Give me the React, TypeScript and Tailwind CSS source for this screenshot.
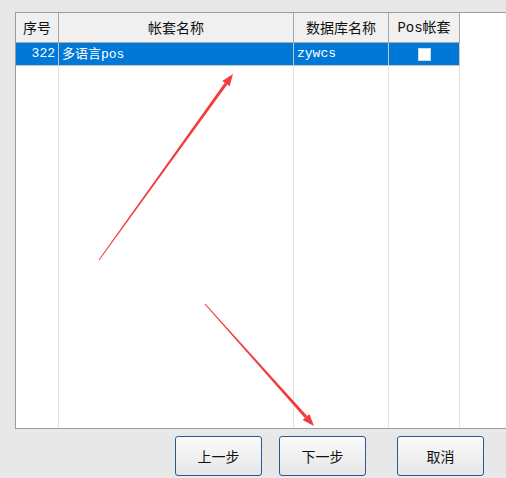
import React from 'react'

const cjk = { fontFamily: '"Noto Sans CJK SC", "DejaVu Sans", sans-serif' }
const mono = { fontFamily: '"Liberation Mono", "Noto Sans CJK SC", monospace' }

type Col = { title: React.ReactNode; key: string; w: string; cell: React.ReactNode; align: string }

const cols: Col[] = [
  { key: 'no', title: '序号', w: 'w-[43px]', cell: <span style={mono}>322</span>, align: 'justify-end pr-[3px]' },
  {
    key: 'name',
    title: '帐套名称',
    w: 'w-[235px]',
    cell: (
      <span>
        <span style={cjk}>多语言</span>
        <span style={mono}>pos</span>
      </span>
    ),
    align: 'justify-start pl-[3px]',
  },
  { key: 'db', title: '数据库名称', w: 'w-[95px]', cell: <span style={mono}>zywcs</span>, align: 'justify-start pl-[3px]' },
  {
    key: 'pos',
    title: (
      <span>
        <span style={mono}>Pos</span>帐套
      </span>
    ),
    w: 'w-[71px]',
    cell: <span className="block w-[13px] h-[13px] bg-white border border-[#d8d8d8]" />,
    align: 'justify-center',
  },
]

function Btn({ label, className }: { label: string; className?: string }) {
  return (
    <button
      className={
        'w-[87px] h-[40px] rounded-[3px] border border-[#2b5a8e] bg-gradient-to-b from-[#fbfbfb] to-[#e6e6e6] text-[14px] text-[#111] ' +
        (className ?? '')
      }
      style={cjk}
    >
      {label}
    </button>
  )
}

export default function App() {
  return (
    <div className="relative w-[506px] h-[478px] bg-[#e8e8e8] overflow-hidden">
      <div className="pt-[12px] pl-[15px]">
        <div className="flex h-[417px] w-[500px] border border-[#9c9c9c] bg-white">
          {cols.map((c) => (
            <div key={c.key} className={'flex flex-col ' + c.w}>
              <div
                className="h-[30px] flex items-center justify-center bg-[#f0f0f0] border-r border-b border-[#a7a7a7] text-[14px] text-[#111]"
                style={cjk}
              >
                {c.title}
              </div>
              <div
                className={
                  'h-[23px] flex items-center bg-[#0078d7] text-white text-[13px] border-b border-r border-[#c5c5c5] ' +
                  c.align
                }
              >
                {c.cell}
              </div>
              <div className="flex-1 border-r border-[#e2e2e2]" />
            </div>
          ))}
          <div className="flex-1" />
        </div>
        <div className="flex mt-[7px] pl-[160px]">
          <Btn label="上一步" />
          <Btn label="下一步" className="ml-[17px]" />
          <Btn label="取消" className="ml-[31px]" />
        </div>
      </div>

      <svg className="absolute inset-0 pointer-events-none" width="506" height="478">
        <polygon points="99.4,260.3 98.6,259.7 224.7,82.8 227.3,84.6" fill="#f23c3c" />
        <polygon points="233,74 229.7,86.3 222.3,81.1" fill="#f23c3c" />
        <polygon points="205.4,303.7 204.6,304.3 304.8,418.1 307.2,415.9" fill="#f23c3c" />
        <polygon points="314,426 309.4,414 302.6,420" fill="#f23c3c" />
      </svg>
    </div>
  )
}
